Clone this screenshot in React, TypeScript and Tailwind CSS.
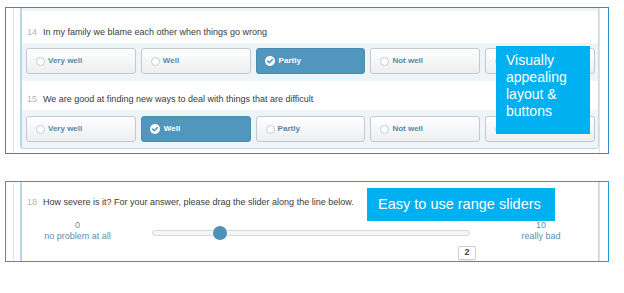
import React from "react";

const font = { fontFamily: '"Liberation Sans", Arial, sans-serif' };

function CheckIcon() {
  return (
    <svg width="10" height="10" viewBox="0 0 10 10" className="shrink-0">
      <circle cx="5" cy="5" r="5" fill="#ffffff" />
      <path d="M2.7 5.1 L4.3 6.7 L7.4 3.5" fill="none" stroke="#5296be" strokeWidth="1.6" strokeLinecap="round" strokeLinejoin="round" />
    </svg>
  );
}

function Option({ label, selected }: { label: string; selected?: boolean }) {
  if (selected) {
    return (
      <div className="h-[26px] rounded-[3px] border border-[#4a8bb1] bg-[#5296be] flex items-center pl-[8px] gap-[4px]">
        <CheckIcon />
        <span className="text-[8px] font-bold text-white leading-none">{label}</span>
      </div>
    );
  }
  return (
    <div className="h-[26px] rounded-[3px] border border-[#c6c9cc] bg-gradient-to-b from-white to-[#eceef0] shadow-[inset_0_1px_0_#ffffff] flex items-center pl-[9px] gap-[3px]">
      <span className="w-[9px] h-[9px] rounded-full border border-[#c5ccd1] bg-white shrink-0" />
      <span className="text-[8px] font-bold text-[#5a86aa] leading-none">{label}</span>
    </div>
  );
}

function Row({ sel, className }: { sel: number; className: string }) {
  const labels = ["Very well", "Well", "Partly", "Not well", "Not at all"];
  return (
    <div className={"bg-[#eef5f9] pl-[4px] pr-[3px] grid grid-cols-5 gap-[5px] " + className}>
      {labels.map((l, i) => (
        <Option key={l} label={l} selected={i === sel} />
      ))}
    </div>
  );
}

function Question({ n, text, className }: { n: string; text: string; className: string }) {
  return (
    <div className={"flex items-center pl-[5px] text-[9px] leading-[14px] " + className}>
      <span className="w-[16px] text-[#b4b4b4]">{n}</span>
      <span className="text-[#3a3a3a]">{text}</span>
    </div>
  );
}

export default function App() {
  return (
    <div className="w-[624px] h-[293px] bg-white relative overflow-hidden" style={font}>
      {/* Top frame */}
      <div className="mt-[7px] ml-[5px] w-[604px] h-[147px] border border-[#2f8fc4] flex pl-[7px]">
        <div className="w-px bg-[#e6e6e6] self-stretch" />
        <div className="ml-[6px] w-[579px] h-[141px] flex flex-col border-l-2 border-r border-b border-l-[#b9d7e7] border-r-[#c8dbe6] border-b-[#b9d7e7] rounded-bl-[4px] rounded-br-[3px] overflow-hidden">
          <div className="h-[3px] bg-[#eef5f9]" />
          <Question n="14" text="In my family we blame each other when things go wrong" className="h-[32px] pt-[14px] items-start" />
          <Row sel={2} className="pt-[5px] pb-[7px]" />
          <Question n="15" text="We are good at finding new ways to deal with things that are difficult" className="h-[29px] pt-[11px] items-start" />
          <Row sel={1} className="pt-[6px] pb-[6px]" />
        </div>
        <div className="w-px bg-[#e2e2e2] self-stretch" />
      </div>

      {/* Bottom frame */}
      <div className="mt-[27px] ml-[5px] w-[604px] h-[81px] border border-[#1e9fdc] flex pl-[7px]">
        <div className="w-px bg-[#e6e6e6] self-stretch" />
        <div className="ml-[6px] w-[579px] self-stretch flex flex-col border-l-2 border-l-[#b9d7e7] border-r border-r-[#c3d8e4]">
          <Question n="18" text="How severe is it? For your answer, please drag the slider along the line below." className="pt-[13px] items-start" />
          <div className="mt-[11px] flex items-start">
            <div className="w-[111px] flex flex-col items-center text-[9px] leading-[11px] text-[#5a8fb5]">
              <span>0</span>
              <span>no problem at all</span>
            </div>
            <div className="ml-[19px] w-[318px] flex flex-col pt-[6px]">
              <div className="h-[14px] relative flex items-center">
                <div className="w-full h-[6px] rounded-full bg-[#f5f5f5] border border-[#d9d9d9]" />
                <div className="absolute left-[61px] top-0 w-[14px] h-[14px] rounded-full bg-[#4b91b9]" />
              </div>
              <div className="mt-[6px] self-end -mr-[6px] w-[18px] h-[14px] rounded-[2px] border border-[#cfcfcf] bg-white shadow-[0_1px_1px_rgba(0,0,0,0.08)] flex items-center justify-center text-[9px] font-bold text-[#444]">
                2
              </div>
            </div>
            <div className="ml-[31px] w-[80px] flex flex-col items-center text-[9px] leading-[11px] text-[#5a8fb5]">
              <span>10</span>
              <span>really bad</span>
            </div>
          </div>
        </div>
        <div className="w-px bg-[#e2e2e2] self-stretch" />
      </div>

      {/* Callouts */}
      <div className="absolute left-[496px] top-[46px] w-[94px] h-[88px] bg-[#00b0f0] text-white text-[14px] leading-[17px] pl-[10px] pt-[6px]">
        Visually
        <br />
        appealing
        <br />
        layout &amp;
        <br />
        buttons
      </div>
      <div className="absolute left-[367px] top-[188px] w-[188px] h-[33px] bg-[#00b0f0] text-white text-[14.5px] leading-[33px] pl-[11px]">
        Easy to use range sliders
      </div>
    </div>
  );
}
